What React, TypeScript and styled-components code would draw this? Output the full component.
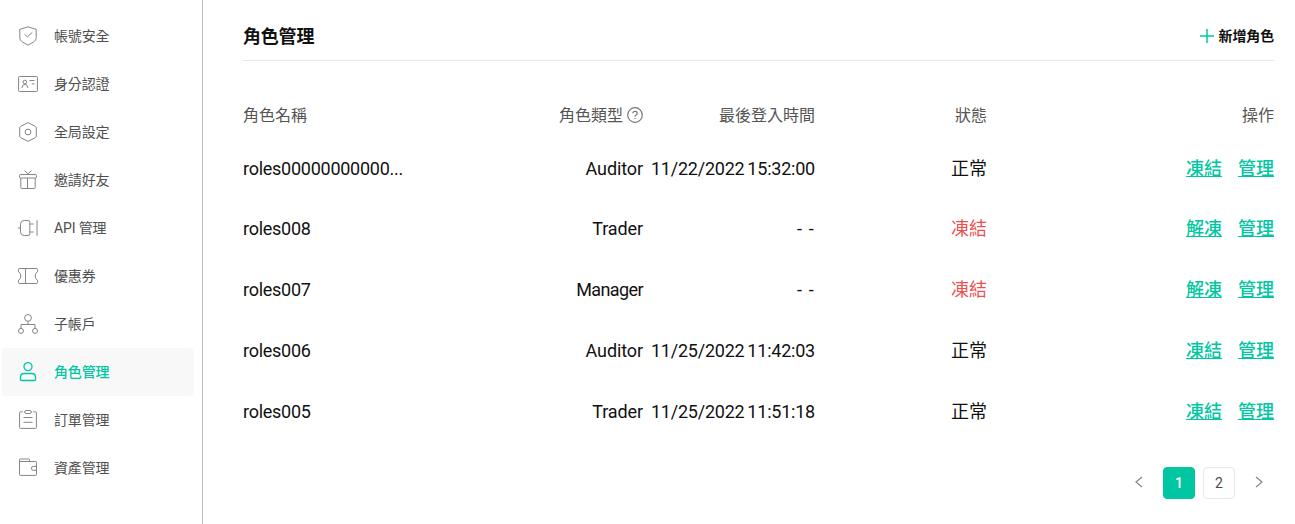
import type { ReactNode } from "react";
import styled, { createGlobalStyle } from "styled-components";

interface MenuItem {
  label: string;
  icon: ReactNode;
  active?: boolean;
}

interface Role {
  name: string;
  type: string;
  lastLogin: string;
  frozen: boolean;
}

const menus: MenuItem[] = [
  {
    label: "帳號安全",
    icon: (
      <>
        <path d="M10 .8 18.2 3.4V11.8Q18.2 14 16.2 15.6L10 19.2 3.8 15.6Q1.8 14 1.8 11.8V3.4Z" />
        <path d="M6.6 8.3 9.4 10.8 14.3 6.4" />
      </>
    ),
  },
  {
    label: "身分認證",
    icon: (
      <>
        <rect x=".6" y="2.5" width="18.8" height="15" rx=".8" />
        <circle cx="6.9" cy="8" r="1.8" />
        <path d="M3.9 14Q4.3 10.3 6.9 10.3T9.9 14M11.5 6.5H16.5M13.8 9.8H16.5" />
      </>
    ),
  },
  {
    label: "全局設定",
    icon: (
      <>
        <path d="M10 .6 17.6 4.5Q18.3 4.9 18.3 5.7V14.3Q18.3 15.1 17.6 15.5L10 19.4 2.4 15.5Q1.7 15.1 1.7 14.3V5.7Q1.7 4.9 2.4 4.5Z" />
        <circle cx="10" cy="10" r="2.9" />
      </>
    ),
  },
  {
    label: "邀請好友",
    icon: (
      <>
        <path d="M6.5 .6 10 3.8 13.5 .6M2.8 8V17.5Q2.8 18.5 3.8 18.5H16.2Q17.2 18.5 17.2 17.5V8M9.5 8V18.5" />
        <rect x="1.6" y="4.5" width="16.8" height="3.5" rx=".7" />
      </>
    ),
  },
  {
    label: "API 管理",
    icon: (
      <>
        <path d="M6.2 2.5H10Q11.8 2.5 11.8 4.3V15.7Q11.8 17.5 10 17.5H6.2Q2.5 17.5 2.5 13.8V6.2Q2.5 2.5 6.2 2.5Z" />
        <path d="M0 10H2.5M11.8 6H15.7M11.8 14H15.7M19 2.3V17.7" />
      </>
    ),
  },
  {
    label: "優惠券",
    icon: (
      <path d="M1.3 2.5H18.7Q19.5 2.5 19.5 3.5V5.7Q17.2 7 17.2 10T19.5 14.3V16.5Q19.5 17.5 18.7 17.5H1.3Q.5 17.5 .5 16.5V14.3Q2.8 13 2.8 10T.5 5.7V3.5Q.5 2.5 1.3 2.5ZM7.5 2.5V17.5" />
    ),
  },
  {
    label: "子帳戶",
    icon: (
      <>
        <circle cx="10" cy="3.9" r="3.4" />
        <circle cx="3" cy="16.9" r="2.5" />
        <circle cx="17" cy="16.9" r="2.5" />
        <path d="M10 7.3V10.5M3 14.4V10.5H17V14.4" />
      </>
    ),
  },
  {
    label: "角色管理",
    active: true,
    icon: (
      <>
        <circle cx="10" cy="4.6" r="4" />
        <path d="M6.3 11.5H13.7Q17.5 11.5 17.5 15.3V17.5Q17.5 18.5 16.5 18.5H3.5Q2.5 18.5 2.5 17.5V15.3Q2.5 11.5 6.3 11.5Z" />
      </>
    ),
  },
  {
    label: "訂單管理",
    icon: (
      <>
        <path d="M4.8 1.8H2.5Q1.6 1.8 1.6 2.7V17.5Q1.6 18.4 2.5 18.4H17.5Q18.4 18.4 18.4 17.5V2.7Q18.4 1.8 17.5 1.8H15.2M5.5 7.5H14.5M5.5 12.3H14.5" />
        <rect x="6.6" y=".5" width="6.8" height="3" rx="1.5" />
      </>
    ),
  },
  {
    label: "資產管理",
    icon: (
      <>
        <path d="M11.5 3.5V1.8Q11.5 1 10.7 1H2.3Q1.5 1 1.5 1.8V16.6Q1.5 17.4 2.3 17.4H17.7Q18.5 17.4 18.5 16.6V4.3Q18.5 3.5 17.7 3.5H1.5" />
        <path d="M18.5 8.4H15.3Q13.4 8.4 13.4 10.4T15.3 12.3H18.5" />
      </>
    ),
  },
];

const roles: Role[] = [
  { name: "roles00000000000...", type: "Auditor", lastLogin: "11/22/2022 15:32:00", frozen: false },
  { name: "roles008", type: "Trader", lastLogin: "", frozen: true },
  { name: "roles007", type: "Manager", lastLogin: "", frozen: true },
  { name: "roles006", type: "Auditor", lastLogin: "11/25/2022 11:42:03", frozen: false },
  { name: "roles005", type: "Trader", lastLogin: "11/25/2022 11:51:18", frozen: false },
];

export default function App() {
  return (
    <>
      <GlobalStyle />
      <Layout>
        <Sidebar>
          {menus.map((menu) => (
            <MenuLink key={menu.label} $active={menu.active}>
              <MenuIcon viewBox="0 0 20 20" $active={menu.active}>
                {menu.icon}
              </MenuIcon>
              {menu.label}
            </MenuLink>
          ))}
        </Sidebar>
        <Main>
          <Header>
            <Title>角色管理</Title>
            <AddButton>
              <PlusIcon viewBox="0 0 14 14">
                <path d="M7 0V14M0 7H14" />
              </PlusIcon>
              新增角色
            </AddButton>
          </Header>
          <HeadRow>
            <Cell>角色名稱</Cell>
            <Cell $right>
              角色類型
              <HelpIcon viewBox="0 0 16 16">
                <circle cx="8" cy="8" r="7.3" />
                <path d="M5.8 6.3Q5.9 4.3 8 4.3T10.2 6.2Q10.2 7.2 9.1 7.9T8 9.7M8 10.9V12" />
              </HelpIcon>
            </Cell>
            <Cell $right>最後登入時間</Cell>
            <Cell $right>狀態</Cell>
            <Cell $right>操作</Cell>
          </HeadRow>
          {roles.map((role) => (
            <Row key={role.name}>
              <Cell $spacing={-0.26}>{role.name}</Cell>
              <Cell $right $spacing={role.type === "Manager" ? -0.6 : -0.1}>
                {role.type}
              </Cell>
              {role.lastLogin ? (
                <LoginTime $right $spacing={-0.22}>
                  {role.lastLogin}
                </LoginTime>
              ) : (
                <Cell $right $spacing={1.2}>
                  - -
                </Cell>
              )}
              <Status $right $frozen={role.frozen}>
                {role.frozen ? "凍結" : "正常"}
              </Status>
              <Actions $right>
                <Action>{role.frozen ? "解凍" : "凍結"}</Action>
                <Action>管理</Action>
              </Actions>
            </Row>
          ))}
          <Pagination>
            <PageArrow>
              <svg viewBox="0 0 8 12">
                <path d="M7 1 1 6 7 11" />
              </svg>
            </PageArrow>
            <PageButton $active>1</PageButton>
            <PageButton>2</PageButton>
            <PageArrow>
              <svg viewBox="0 0 8 12">
                <path d="M1 1 7 6 1 11" />
              </svg>
            </PageArrow>
          </Pagination>
        </Main>
      </Layout>
    </>
  );
}

const GlobalStyle = createGlobalStyle`
  * {
    box-sizing: border-box;
  }

  body {
    margin: 0;
    background: #fff;
    color: #111;
    font-family: Roboto, "Noto Sans CJK TC", sans-serif;
  }

  button {
    padding: 0;
    border: 0;
    background: none;
    color: inherit;
    font: inherit;
  }
`;

const Layout = styled.div`
  display: flex;
  height: 524px;
  overflow: hidden;
`;

const Sidebar = styled.nav`
  flex: 0 0 203px;
  padding: 12px 8px 0 2px;
  border-right: 1px solid #bdbdbd;
`;

const MenuLink = styled.a<{ $active?: boolean }>`
  display: flex;
  align-items: center;
  gap: 16px;
  height: 48px;
  padding-left: 16px;
  border-radius: 4px;
  background: ${({ $active }) => ($active ? "#f8f8f8" : "transparent")};
  color: ${({ $active }) => ($active ? "#00c7a2" : "#4f4f4f")};
  font-size: 14px;
  font-weight: ${({ $active }) => ($active ? 500 : 400)};
  letter-spacing: -0.15px;
  line-height: 20px;
`;

const MenuIcon = styled.svg<{ $active?: boolean }>`
  width: 20px;
  height: 20px;
  fill: none;
  stroke: ${({ $active }) => ($active ? "#00c7a2" : "#858585")};
  stroke-width: ${({ $active }) => ($active ? 1.3 : 1)};
`;

const Main = styled.main`
  flex: 1;
  padding: 12px 21px 0 40px;
`;

const Header = styled.header`
  display: flex;
  align-items: center;
  justify-content: space-between;
  height: 49px;
  border-bottom: 1px solid #e8e8e8;
`;

const Title = styled.h1`
  margin: 0;
  padding-top: 1px;
  font-size: 18px;
  font-weight: 700;
  letter-spacing: -0.2px;
  line-height: 24px;
`;

const AddButton = styled.button`
  display: flex;
  align-items: center;
  gap: 5px;
  font-size: 14px;
  font-weight: 700;
  letter-spacing: -0.15px;
  line-height: 20px;
`;

const PlusIcon = styled.svg`
  width: 14px;
  height: 14px;
  stroke: #00c7a2;
  stroke-width: 1.5;
`;

const Row = styled.div`
  display: grid;
  grid-template-columns: 228px 172px 172px 172px 1fr;
  align-items: center;
  height: 60.8px;
  font-size: 18px;
  line-height: 26px;
`;

const HeadRow = styled(Row)`
  height: 45px;
  margin: 32px 0 0.2px;
  color: #555;
  font-size: 16px;
`;

const Cell = styled.div<{ $right?: boolean; $spacing?: number }>`
  display: flex;
  align-items: center;
  justify-content: ${({ $right }) => ($right ? "flex-end" : "flex-start")};
  letter-spacing: ${({ $spacing = 0 }) => $spacing}px;
  white-space: nowrap;
`;

const LoginTime = styled(Cell)`
  word-spacing: -1.4px;
`;

const HelpIcon = styled.svg`
  width: 16px;
  height: 16px;
  margin: 0 0 2px 4px;
  fill: none;
  stroke: #777;
  stroke-width: 1.2;
`;

const Status = styled(Cell)<{ $frozen: boolean }>`
  color: ${({ $frozen }) => ($frozen ? "#ed4f4f" : "#111")};
`;

const Actions = styled(Cell)`
  gap: 16px;
`;

const Action = styled.a`
  color: #00c7a2;
  font-weight: 500;
  text-decoration: underline;
`;

const Pagination = styled.div`
  display: flex;
  justify-content: flex-end;
  gap: 8px;
  margin: 24.8px -1px 0 0;
`;

const PageButton = styled.button<{ $active?: boolean }>`
  width: 32px;
  height: 32px;
  border: 1px solid ${({ $active }) => ($active ? "#00c7a2" : "#e8e8e8")};
  border-radius: 4px;
  background: ${({ $active }) => ($active ? "#00c7a2" : "#fff")};
  color: ${({ $active }) => ($active ? "#fff" : "#4a4a4a")};
  font-size: 14px;
  font-weight: ${({ $active }) => ($active ? 500 : 400)};
`;

const PageArrow = styled.button`
  display: flex;
  align-items: center;
  justify-content: center;
  width: 32px;
  height: 30px;

  svg {
    width: 8px;
    height: 12px;
    fill: none;
    stroke: #858585;
    stroke-width: 1.2;
  }
`;
